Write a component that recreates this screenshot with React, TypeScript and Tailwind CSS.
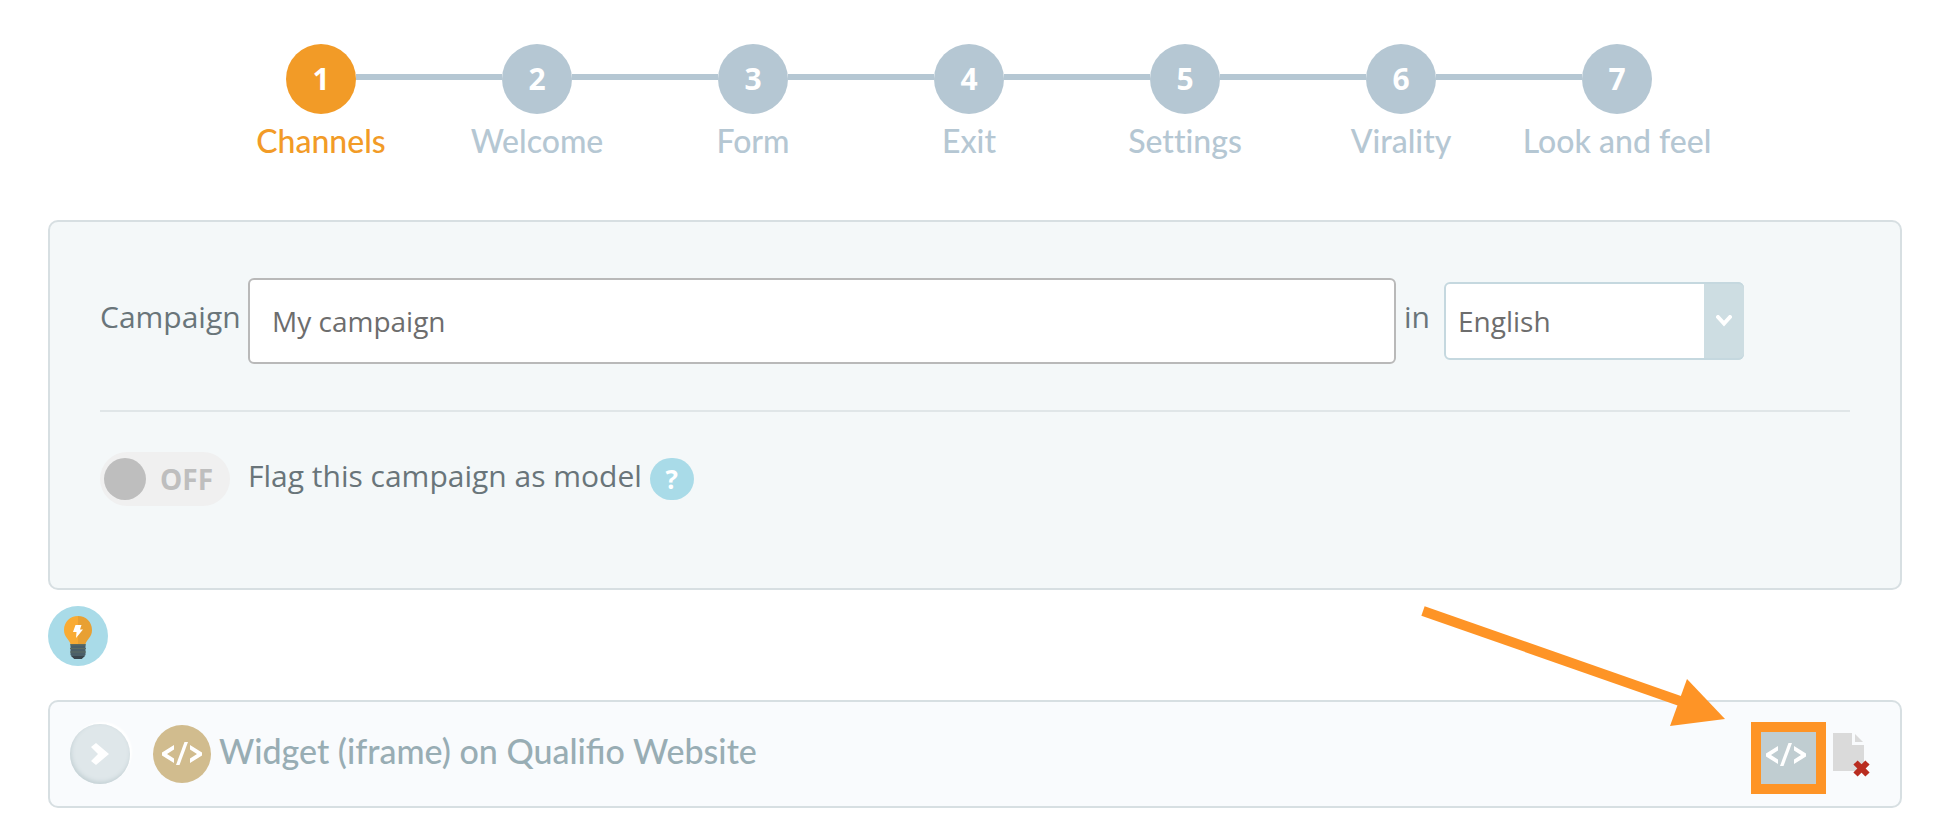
import React, { useState } from "react";

const STEPS = ["Channels", "Welcome", "Form", "Exit", "Settings", "Virality", "Look and feel"];

const CodeIcon: React.FC = () => (
  <svg width="40" height="24" viewBox="0 0 40 24" fill="#fff" aria-hidden="true">
    <path d="M12 3v4.500l-7 4.500 7 4.500v4.500L0 13.500v-3z" />
    <path d="M22.500 0h3.500L17.500 23H14z" />
    <path d="M28 3v4.500l7 4.500-7 4.500v4.500l12-7.500v-3z" />
  </svg>
);

const BulbIcon: React.FC = () => (
  <svg width="60" height="60" viewBox="0 0 60 60" aria-hidden="true">
    <circle cx="30" cy="30" r="30" fill="#a9dbe8" />
    <path d="M30 10c-8 0-14 6-14 14 0 7 5 9 6.500 14H30z" fill="#f9ab33" />
    <path d="M30 10c8 0 14 6 14 14 0 7-5 9-6.500 14H30z" fill="#e8a033" />
    <path d="M22.500 38h15v11l-4 4h-7l-4-4z" fill="#4b5f68" />
    <path d="M22.500 38h15v1.500h-15zM22 42h16v1H22zM22 45.500h16v1H22z" fill="#5d6d63" />
    <path d="M23 50h14l-3.500 3h-7z" fill="#3a464d" />
    <path d="M27.500 19h6l-1.500 4.500h3L28 32l.5-6H25z" fill="#fff" />
  </svg>
);

const RemoveFileIcon: React.FC = () => (
  <svg width="38" height="46" viewBox="0 0 38 46" aria-hidden="true">
    <path d="M0 1h19v12h12v26H0z" fill="#dadada" />
    <path d="M22 2l8 8h-8z" fill="#dadada" />
    <path d="M22.500 30.500l12 12M34.500 30.500l-12 12" stroke="#b92d20" strokeWidth="6" />
  </svg>
);

const Stepper: React.FC = () => (
  <nav aria-label="Campaign steps" className="pl-[165px] pr-[177px]">
    <ol className="grid grid-cols-7">
      {STEPS.map((name, i) => (
        <li key={name}>
          <a
            href={`#step-${i + 1}`}
            aria-current={i === 0 ? "step" : undefined}
            className={`flex flex-col ${i === 0 ? "text-[#f29b27]" : "text-[#b5c7d3]"}`}
          >
            <span className="flex items-start">
              <span className={`mt-[30px] h-1.5 flex-1 ${i === 0 ? "" : "bg-[#b5c7d3]"}`} />
              <span
                className={`flex size-[70px] items-center justify-center rounded-full pb-0.5 text-[30px] font-bold text-white ${
                  i === 0 ? "bg-[#f29b27]" : "bg-[#b5c7d3]"
                }`}
              >
                {i + 1}
              </span>
              <span
                className={`mt-[30px] h-1.5 flex-1 ${i === STEPS.length - 1 ? "" : "bg-[#b5c7d3]"}`}
              />
            </span>
            <span className="mt-[7px] whitespace-nowrap text-center font-[Lato,sans-serif] text-[32px] font-medium leading-10 [font-variant-ligatures:none]">
              {name}
            </span>
          </a>
        </li>
      ))}
    </ol>
  </nav>
);

const CampaignPanel: React.FC = () => {
  const [name, setName] = useState("My campaign");
  const [language, setLanguage] = useState("English");
  const [isModel, setIsModel] = useState(false);

  return (
    <section className="rounded-[10px] border-2 border-[#d7dfe2] bg-[#f4f8f9] px-[50px] pt-14 pb-[82px] text-[30px] text-[#69757a]">
      <div className="flex items-center pr-[106px]">
        <label htmlFor="campaign-name" className="w-[148px] pb-2.5">
          Campaign
        </label>
        <input
          id="campaign-name"
          type="text"
          value={name}
          onChange={(e) => setName(e.target.value)}
          className="h-[86px] min-w-0 flex-1 rounded-md border-2 border-[#b9b9b9] bg-white px-[22px] text-[28px] text-[#6d6d6d]"
        />
        <label htmlFor="campaign-language" className="w-12 pb-2.5 pl-2">
          in
        </label>
        <div className="relative">
          <select
            id="campaign-language"
            value={language}
            onChange={(e) => setLanguage(e.target.value)}
            className="h-[78px] w-[300px] appearance-none rounded-md border-2 border-[#c5d8df] bg-white pl-3 text-[28px] text-[#6d6d6d]"
          >
            <option>English</option>
            <option>French</option>
            <option>Dutch</option>
          </select>
          <span className="pointer-events-none absolute inset-y-0 right-0 flex w-10 items-center justify-center rounded-r-md border-y-2 border-[#c5d8df] bg-[#cddde2]">
            <svg width="16" height="12" viewBox="0 0 16 12" fill="none" aria-hidden="true">
              <path d="M2 2l6 6.500L14 2" stroke="#fff" strokeWidth="4" strokeLinecap="round" />
            </svg>
          </span>
        </div>
      </div>

      <hr className="mt-[46px] mb-10 border-t-2 border-[#e0e6e8]" />

      <div className="flex h-[54px] items-center">
        <label className="flex cursor-pointer items-center">
          <span className="flex h-[54px] w-[130px] items-center gap-[14px] rounded-full bg-[#f0f0f0] pl-1 text-[28px] font-bold text-[#bebebe]">
            <input
              type="checkbox"
              checked={isModel}
              onChange={(e) => setIsModel(e.target.checked)}
              className="size-[42px] appearance-none rounded-full bg-[#bebebe]"
            />
            {isModel ? "ON" : "OFF"}
          </span>
          <span className="pb-2 pl-[18px]">Flag this campaign as model</span>
        </label>
        <button
          type="button"
          aria-label="Help"
          className="ml-2 flex h-[42px] w-11 items-center justify-center rounded-full bg-[#a9dbe8] text-[26px] font-bold text-white"
        >
          ?
        </button>
      </div>
    </section>
  );
};

const ChannelRow: React.FC = () => (
  <section className="relative flex h-[108px] items-center rounded-[10px] border-2 border-[#d7dfe2] bg-[#f9fbfd] pr-[29px] pl-5">
    <button
      type="button"
      aria-label="Expand channel"
      className="flex size-[60px] items-center justify-center rounded-full bg-[#dfe7ea] shadow-[inset_1px_-2px_4px_#c3d0d4,2px_-2px_2px_#fff]"
    >
      <svg width="20" height="24" viewBox="0 0 20 24" aria-hidden="true">
        <path d="M6 1l13 11L6 23l-5-4 7-7-7-7z" fill="#fff" />
      </svg>
    </button>
    <span className="ml-[23px] flex size-[58px] items-center justify-center rounded-full bg-[#d1bc8e]">
      <CodeIcon />
    </span>
    <h2 className="ml-2 pb-1.5 font-[Lato,sans-serif] text-[34px] font-medium leading-10 text-[#98adb4]">
      Widget (iframe) on Qualifio Website
    </h2>
    <button
      type="button"
      aria-label="Get embed code"
      className="mt-2 ml-auto flex h-[72px] w-[75px] justify-start border-10 border-[#fe9426] bg-[#c0cdd1] pt-[11px] pl-[5px]"
    >
      <CodeIcon />
    </button>
    <button type="button" aria-label="Remove channel" className="mt-0.5 ml-[7px]">
      <RemoveFileIcon />
    </button>

    {/* Callout arrow pointing at the embed button */}
    <svg
      className="pointer-events-none absolute -top-[98px] right-[174px]"
      width="308"
      height="124"
      viewBox="0 0 308 124"
      fill="#fe9426"
      aria-hidden="true"
    >
      <path d="M5 7L262 97" stroke="#fe9426" strokeWidth="10" />
      <path d="M269 75l38 40-55 7z" />
    </svg>
  </section>
);

const App: React.FC = () => (
  <main className="bg-white pt-11 pr-8 pl-12 font-['Open_Sans',sans-serif]">
    <Stepper />
    <div className="mt-[59px]">
      <CampaignPanel />
    </div>
    <button type="button" aria-label="Show tips" className="mt-4 mb-[34px] block">
      <BulbIcon />
    </button>
    <ChannelRow />
  </main>
);

export default App;
